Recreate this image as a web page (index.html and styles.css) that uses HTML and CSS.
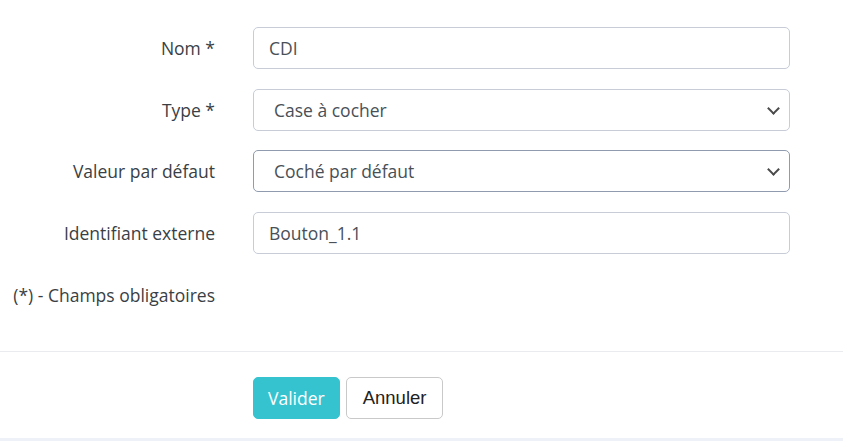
FILE: index.html
```html
<!DOCTYPE html>
<html lang="fr">
<head>
    <meta charset="UTF-8">
    <meta name="viewport" content="width=device-width, initial-scale=1.0">
    <title>Champ personnalisé</title>

    <link rel="stylesheet" href="styles.css">
</head>
<body>
    <div class="panel">
        <form class="form-body">
            <div class="form-row">
                <label for="nom">Nom *</label>
                <input type="text" id="nom" class="field" value="CDI">
            </div>

            <div class="form-row">
                <label for="type">Type *</label>
                <div class="select-wrap">
                    <select id="type" class="field">
                        <option>Case à cocher</option>
                    </select>
                </div>
            </div>

            <div class="form-row">
                <label for="defaut">Valeur par défaut</label>
                <div class="select-wrap">
                    <select id="defaut" class="field active">
                        <option>Coché par défaut</option>
                    </select>
                </div>
            </div>

            <div class="form-row">
                <label for="ext">Identifiant externe</label>
                <input type="text" id="ext" class="field" value="Bouton_1.1">
            </div>

            <div class="note">(*) - Champs obligatoires</div>
        </form>

        <div class="form-footer">
            <button type="submit" class="btn btn-primary">Valider</button>
            <button type="button" class="btn btn-default">Annuler</button>
        </div>
    </div>
</body>
</html>
```

FILE: styles.css
```css
body {
    margin: 0;
    padding: 0;
    background-color: #eef1f8;
    font-family: "Open Sans", Arial, sans-serif;
    font-size: 17.5px;
    color: #3a3f45;
}

.panel {
    background-color: #fff;
    height: 438px;
}

.form-body {
    padding-top: 27px;
    display: flex;
    flex-direction: column;
    gap: 19.5px;
}

.form-row {
    display: flex;
    align-items: center;
}

.form-row label {
    width: 215px;
    padding-right: 38px;
    text-align: right;
    flex-shrink: 0;
}

.field {
    width: 537px;
    height: 42px;
    box-sizing: border-box;
    padding: 0 15px;
    font-family: "Open Sans", Arial, sans-serif;
    font-size: 17.5px;
    color: #495057;
    background-color: #fff;
    border: 1px solid #c7ccd6;
    border-radius: 5px;
    outline: none;
}

.select-wrap {
    position: relative;
}

.select-wrap select {
    appearance: none;
    -webkit-appearance: none;
    padding-left: 20px;
}

.select-wrap select.active {
    border-color: #909bb0;
}

.select-wrap::after {
    content: "";
    position: absolute;
    right: 12px;
    top: 15px;
    width: 7px;
    height: 7px;
    border-right: 2px solid #4a4a4a;
    border-bottom: 2px solid #4a4a4a;
    transform: rotate(45deg);
    pointer-events: none;
}

.note {
    width: 215px;
    text-align: right;
    margin-top: 10px;
}

.form-footer {
    margin-top: 44px;
    border-top: 1px solid #e9ebee;
    padding: 25px 0 0 253px;
    display: flex;
    gap: 6px;
}

.btn {
    height: 42px;
    box-sizing: border-box;
    border-radius: 5px;
    cursor: pointer;
}

.btn-primary {
    background-color: #36c3d0;
    border: 1px solid #36c3d0;
    color: #fff;
    font-family: "Open Sans", Arial, sans-serif;
    font-size: 17.5px;
    padding: 0 14px;
}

.btn-default {
    background-color: #fff;
    border: 1px solid #c9c9c9;
    color: #222;
    font-family: "Liberation Sans", Arial, sans-serif;
    font-size: 18.5px;
    padding: 0 16px;
}
```
